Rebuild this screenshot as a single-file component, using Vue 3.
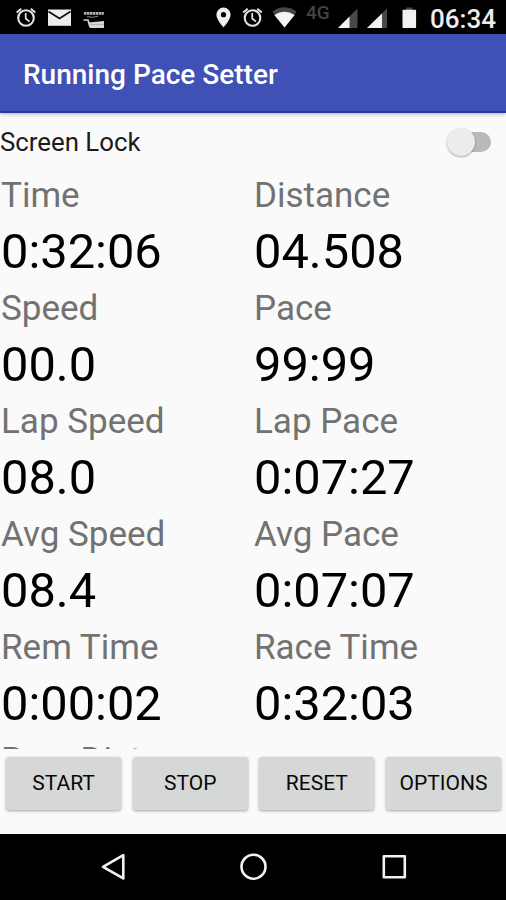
<script setup>
const metrics = [
  ['Time', '0:32:06'], ['Distance', '04.508'],
  ['Speed', '00.0'], ['Pace', '99:99'],
  ['Lap Speed', '08.0'], ['Lap Pace', '0:07:27'],
  ['Avg Speed', '08.4'], ['Avg Pace', '0:07:07'],
  ['Rem Time', '0:00:02'], ['Race Time', '0:32:03'],
  ['Rem Dist', '']
]
const actions = ['START', 'STOP', 'RESET', 'OPTIONS']
</script>

<template>
  <main class="phone">
    <header class="status">
      <svg class="icons" width="430" height="34" viewBox="0 0 430 34">
        <g v-for="x in [26, 252.5]" :key="x" :transform="`translate(${x} 18)`" fill="none" stroke="#e4e4e4">
          <circle r="7.8" stroke-width="2.1" />
          <path d="M-9.3-5.6-4.8-9.3M9.3-5.6 4.8-9.3" stroke-width="2" />
          <path d="M-.3-5V.5L3.5 3.6" stroke-width="1.7" />
        </g>
        <path d="M48 9.5h23v16.3H48z" fill="#ededed" />
        <path d="m48.5 11.5 11 7 11-7" fill="none" stroke="#111" stroke-width="1.8" />
        <g fill="none" stroke="#b4b4b4">
          <path d="M84 13.300h20" stroke-width="2.800" stroke-dasharray="2.400 .5" />
          <path d="M87 16.600q6 1.600 11-.4" stroke="#8a8a8a" stroke-width="1" />
          <path d="M83.500 20h4.500l2 7" stroke="#d0d0d0" stroke-width="1.700" />
        </g>
        <path d="M88.500 22.500 104 21v7H90z" fill="#d6d6d6" />
        <path d="M90.500 24.500h13" stroke="#a4a4a4" stroke-width=".7" />
        <path d="M223.500 7.600a7 7 0 0 0-7.100 7.100c0 5 7.100 12.600 7.100 12.600s7.100-7.600 7.100-12.600a7 7 0 0 0-7.100-7.100zm0 4.500a2.600 2.600 0 1 1 0 5.200 2.600 2.600 0 0 1 0-5.200z" fill="#eee" fill-rule="evenodd" />
        <path d="M284.500 27.500 272.300 11.600Q284.500 2.800 296.700 11.600z" fill="#454545" />
        <path d="M284.500 27.500 274.300 15Q284.500 8.600 294.700 15z" fill="#f4f4f4" />
        <path d="M338 28 357.500 8.500V28z" fill="#484848" />
        <path d="M338 28 349.500 16.500V28z" fill="#f1f1f1" />
        <path d="M367 28 387 8.500V28z" fill="#484848" />
        <path d="M367 28 382 13.400V28z" fill="#f1f1f1" />
        <path d="M406 7.500h6.500V10H406z" fill="#444" />
        <rect x="402.500" y="9.800" width="13.600" height="18.200" rx=".8" fill="#f2f2f2" />
      </svg>
      <span class="network">4G</span>
      <time class="clock">06:34</time>
    </header>
    <h1 class="title">Running Pace Setter</h1>
    <label class="lock">
      <span>Screen Lock</span>
      <span class="switch"><i class="knob"></i></span>
    </label>
    <section class="metrics">
      <div v-for="[name, value] in metrics" :key="name" class="metric">
        <div class="name">{{ name }}</div>
        <div v-if="value" class="value">{{ value }}</div>
      </div>
    </section>
    <section class="actions">
      <button v-for="a in actions" :key="a" type="button">{{ a }}</button>
    </section>
    <nav class="nav">
      <svg width="506" height="66" viewBox="0 0 506 66" fill="none" stroke="#f2f2f2" stroke-width="2.600" stroke-linejoin="round">
        <path d="M103 32.800 123.300 21.200V44.400z" />
        <circle cx="253.500" cy="32.700" r="12" />
        <rect x="383.800" y="22.300" width="21" height="21" />
      </svg>
    </nav>
  </main>
</template>

<style>
body { margin: 0; background: #fafafa; }
</style>

<style scoped>
.phone {
  width: 506px;
  height: 900px;
  display: flex;
  flex-direction: column;
  overflow: hidden;
  background: #fafafa;
  color: #000;
  font-family: Roboto, sans-serif;
}
.status {
  flex: none;
  height: 34px;
  position: relative;
  display: flex;
  justify-content: flex-end;
  background: #000;
}
.icons { position: absolute; left: 0; top: 0; }
.network {
  position: absolute;
  left: 306px;
  top: 3px;
  font-size: 19px;
  font-weight: 500;
  line-height: 20px;
  color: #444;
}
.clock {
  padding-right: 10px;
  font-size: 26px;
  line-height: 38px;
  font-weight: 500;
  color: #eee;
}
.title {
  flex: none;
  box-sizing: border-box;
  height: 79px;
  margin: 0;
  padding-left: 23px;
  border-bottom: 2px solid #2139a0;
  background: #3f51b5;
  box-shadow: 0 1px 4px rgba(0, 0, 0, .3);
  color: #fff;
  font-size: 28px;
  font-weight: 500;
  line-height: 82px;
}
.lock {
  flex: none;
  height: 59px;
  box-sizing: border-box;
  padding: 0 15px 1px 0;
  display: flex;
  align-items: center;
  justify-content: space-between;
  font-size: 25.8px;
  color: #1b1b1b;
}
.switch {
  width: 42px;
  height: 20px;
  border-radius: 10px;
  background: #b9b9b9;
}
.knob {
  display: block;
  width: 28px;
  height: 28px;
  margin: -4px 0 0 -2px;
  border-radius: 50%;
  background: #ececec;
  box-shadow: 0 1px 2px rgba(0, 0, 0, .35);
}
.metrics {
  flex: none;
  height: 577px;
  overflow: hidden;
  display: grid;
  grid-template-columns: 253px 253px;
  grid-auto-rows: 113px;
  align-content: start;
}
.metric { padding-left: 1px; white-space: nowrap; }
.name { font-size: 35px; line-height: 47px; color: #727272; }
.value { font-size: 48.8px; line-height: 66px; }
.actions {
  flex: none;
  height: 85px;
  box-sizing: border-box;
  padding: 8px 5px 24px 6px;
  display: grid;
  grid-template-columns: repeat(4, 1fr);
  gap: 11.5px;
}
button {
  padding: 0;
  border: 0;
  border-radius: 3px;
  background: #d6d8d7;
  box-shadow: 0 1px 3px rgba(0, 0, 0, .35);
  color: #080808;
  font: 400 21px/53px Roboto, sans-serif;
}
.nav { flex: none; height: 66px; background: #000; }
.nav svg { display: block; }
</style>
